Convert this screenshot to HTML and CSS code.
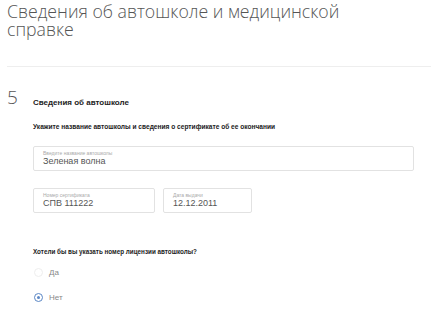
FILE: index.html
```html
<!DOCTYPE html>
<html lang="ru">
<head>
  <meta charset="UTF-8" />
  <title>Сведения об автошколе</title>
  <link rel="stylesheet" href="styles.css">
</head>
<body>

<h1 class="page-title">Сведения об автошколе и медицинской справке</h1>
<div class="divider"></div>

<div class="step">
  <div class="step-num">5</div>
  <div class="step-body">
    <h2 class="step-title">Сведения об автошколе</h2>
    <p class="hint">Укажите название автошколы и сведения о сертификате об ее окончании</p>

    <div class="field field-wide">
      <span class="field-label">Введите название автошколы</span>
      <span class="field-value">Зеленая волна</span>
    </div>

    <div class="field-row">
      <div class="field field-cert">
        <span class="field-label">Номер сертификата</span>
        <span class="field-value">СПВ 111222</span>
      </div>
      <div class="field field-date">
        <span class="field-label">Дата выдачи</span>
        <span class="field-value">12.12.2011</span>
      </div>
    </div>

    <p class="hint question">Хотели бы вы указать номер лицензии автошколы?</p>

    <label class="radio">
      <span class="radio-dot"></span>
      <span class="radio-text">Да</span>
    </label>
    <label class="radio checked">
      <span class="radio-dot"></span>
      <span class="radio-text">Нет</span>
    </label>
  </div>
</div>

</body>
</html>
```

FILE: styles.css
```css
body {
  margin: 0;
  padding: 0 0 0 7px;
  background: #fff;
  font-family: "Liberation Sans", Arial, sans-serif;
  color: #333;
}

.page-title {
  margin: 2px 0 0;
  font-family: "Open Sans", sans-serif;
  font-weight: 300;
  font-size: 17.7px;
  line-height: 18px;
  color: #555;
  width: 360px;
}

.divider {
  margin-top: 28px;
  height: 1px;
  background: #eee;
}

.step {
  display: flex;
  padding-top: 20px;
}

.step-num {
  width: 26px;
  font-family: "Open Sans", sans-serif;
  font-weight: 300;
  font-size: 19px;
  line-height: 20px;
  color: #555;
}

.step-body {
  flex: 1;
}

.step-title {
  margin: 11px 0 0;
  font-size: 8px;
  font-weight: bold;
  color: #222;
}

.hint {
  margin: 16px 0 0;
  font-size: 6.6px;
  font-weight: bold;
  color: #222;
}

.field {
  box-sizing: border-box;
  border: 1px solid #e2e2e2;
  border-radius: 2px;
  height: 25px;
  padding: 3px 9px 0;
  display: flex;
  flex-direction: column;
}

.field-wide {
  margin-top: 16px;
  width: 381px;
}

.field-label {
  font-size: 5px;
  line-height: 6px;
  color: #aaa;
}

.field-value {
  font-size: 9px;
  line-height: 11px;
  color: #555;
}

.field-row {
  display: flex;
  gap: 8px;
  margin-top: 17px;
}

.field-cert {
  width: 122px;
}

.field-date {
  width: 89px;
}

.question {
  margin-top: 35px;
  font-size: 6.3px;
}

.radio {
  display: flex;
  align-items: center;
  gap: 6px;
  margin-top: 11px;
  height: 12px;
  padding-left: 1px;
}

.radio + .radio {
  margin-top: 13px;
}

.radio-dot {
  box-sizing: border-box;
  width: 9px;
  height: 9px;
  border-radius: 50%;
  border: 1px solid #eee;
  position: relative;
}

.radio.checked .radio-dot {
  border-color: #5b87c5;
}

.radio.checked .radio-dot::after {
  content: "";
  position: absolute;
  left: 2px;
  top: 2px;
  width: 3px;
  height: 3px;
  border-radius: 50%;
  background: #5b87c5;
}

.radio-text {
  font-size: 8px;
  color: #888;
}
```
